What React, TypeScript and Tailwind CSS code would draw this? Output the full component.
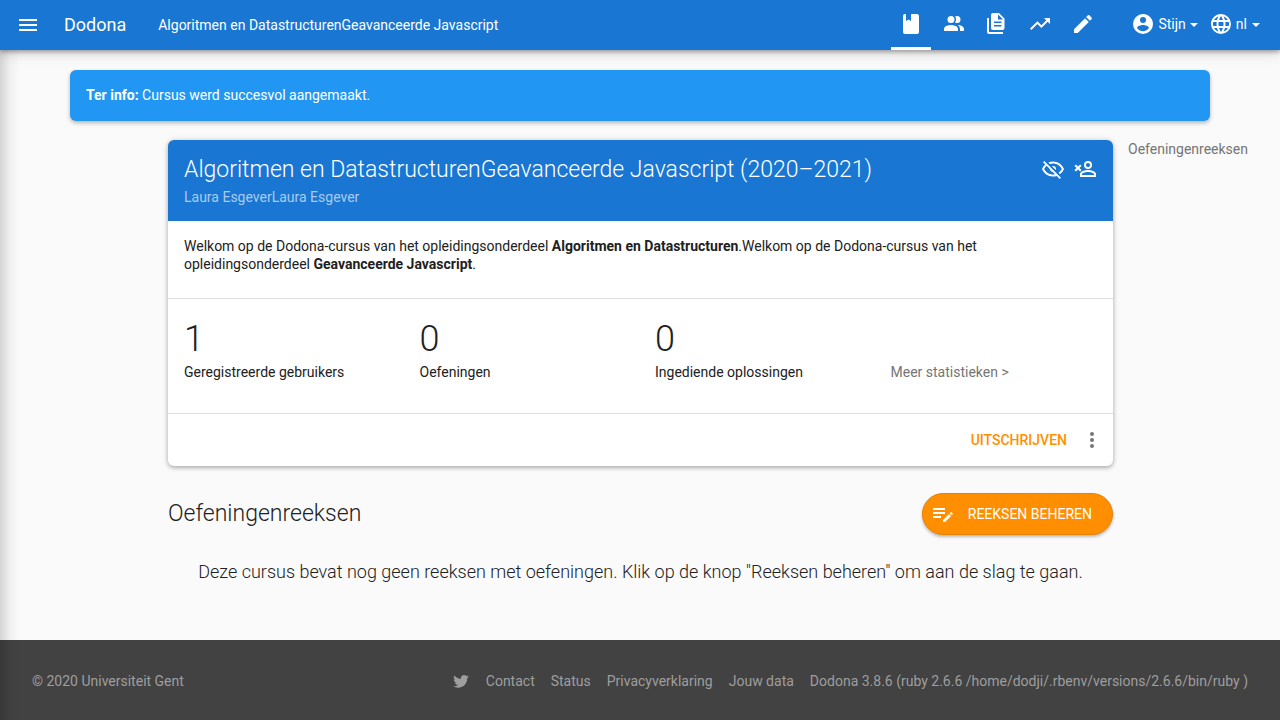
import React from "react";

const paths = {
  menu: "M3,6H21V8H3V6M3,11H21V13H3V11M3,16H21V18H3V16Z",
  book: "M18,22A2,2 0 0,0 20,20V4C20,2.89 19.1,2 18,2H12V9L9.5,7.5L7,9V2H6A2,2 0 0,0 4,4V20A2,2 0 0,0 6,22H18Z",
  users:
    "M16 17V19H2V17S2 13 9 13 16 17 16 17M12.5 7.5A3.5 3.5 0 1 0 9 11A3.5 3.5 0 0 0 12.5 7.5M15.94 13A5.32 5.32 0 0 1 18 17V19H22V17S22 13.37 15.94 13M15 4A3.39 3.39 0 0 0 13.07 4.59A5 5 0 0 1 13.07 10.41A3.39 3.39 0 0 0 15 11A3.5 3.5 0 0 0 15 4Z",
  documents:
    "M8,1H14L19.5,6.5V16A2,2 0 0,1 17.5,18H8A2,2 0 0,1 6,16V3A2,2 0 0,1 8,1M13,2.5V7.5H18L13,2.5M9,9.5V11H16.5V9.5H9M9,13V14.5H16.5V13H9M2,6H4V20H18V22H4A2,2 0 0,1 2,20V6Z",
  trend:
    "M16,6L18.29,8.29L13.41,13.17L9.41,9.17L2,16.59L3.41,18L9.41,12L13.41,16L19.71,9.71L22,12V6H16Z",
  pencil:
    "M20.71,7.04C21.1,6.65 21.1,6 20.71,5.63L18.37,3.29C18,2.9 17.35,2.9 16.96,3.29L15.12,5.12L18.87,8.87M3,17.25V21H6.75L17.81,9.93L14.06,6.18L3,17.25Z",
  account:
    "M12,19.2C9.5,19.2 7.29,17.92 6,16C6.03,14 10,12.9 12,12.9C14,12.9 17.97,14 18,16C16.71,17.92 14.5,19.2 12,19.2M12,5A3,3 0 0,1 15,8A3,3 0 0,1 12,11A3,3 0 0,1 9,8A3,3 0 0,1 12,5M12,2A10,10 0 0,0 2,12A10,10 0 0,0 12,22A10,10 0 0,0 22,12C22,6.47 17.5,2 12,2Z",
  web: "M16.36,14C16.44,13.34 16.5,12.68 16.5,12C16.5,11.32 16.44,10.66 16.36,10H19.74C19.9,10.64 20,11.31 20,12C20,12.69 19.9,13.36 19.74,14M14.59,19.56C15.19,18.45 15.65,17.25 15.97,16H18.92C17.96,17.65 16.43,18.93 14.59,19.56M14.34,14H9.66C9.56,13.34 9.5,12.68 9.5,12C9.5,11.32 9.56,10.65 9.66,10H14.34C14.43,10.65 14.5,11.32 14.5,12C14.5,12.68 14.43,13.34 14.34,14M12,19.96C11.17,18.76 10.5,17.43 10.09,16H13.91C13.5,17.43 12.83,18.76 12,19.96M8,8H5.08C6.03,6.34 7.57,5.06 9.4,4.44C8.8,5.55 8.35,6.75 8,8M5.08,16H8C8.35,17.25 8.8,18.45 9.4,19.56C7.57,18.93 6.03,17.65 5.08,16M4.26,14C4.1,13.36 4,12.69 4,12C4,11.31 4.1,10.64 4.26,10H7.64C7.56,10.66 7.5,11.32 7.5,12C7.5,12.68 7.56,13.34 7.64,14M12,4.03C12.83,5.23 13.5,6.57 13.91,8H10.09C10.5,6.57 11.17,5.23 12,4.03M18.92,8H15.97C15.65,6.75 15.19,5.55 14.59,4.44C16.43,5.07 17.96,6.34 18.92,8M12,2C6.47,2 2,6.5 2,12A10,10 0 0,0 12,22A10,10 0 0,0 22,12A10,10 0 0,0 12,2Z",
  hidden:
    "M2,5.27L3.28,4L20,20.72L18.73,22L15.65,18.92C14.5,19.3 13.28,19.5 12,19.5C7,19.5 2.73,16.39 1,12C1.69,10.24 2.79,8.69 4.19,7.46L2,5.27M12,9A3,3 0 0,1 15,12C15,12.35 14.94,12.69 14.83,13L11,9.17C11.31,9.06 11.65,9 12,9M12,4.5C17,4.5 21.27,7.61 23,12C22.18,14.08 20.79,15.88 19,17.19L17.58,15.76C18.94,14.82 20.06,13.54 20.82,12C19.17,8.64 15.76,6.5 12,6.5C10.91,6.5 9.84,6.68 8.84,7L7.3,5.47C8.74,4.85 10.33,4.5 12,4.5M3.18,12C4.83,15.36 8.24,17.5 12,17.5C12.69,17.5 13.37,17.43 14,17.29L11.72,15C10.29,14.85 9.15,13.71 9,12.28L5.6,8.87C4.61,9.72 3.78,10.78 3.18,12Z",
  closed:
    "M15,4A4,4 0 0,0 11,8A4,4 0 0,0 15,12A4,4 0 0,0 19,8A4,4 0 0,0 15,4M15,5.9C16.16,5.9 17.1,6.84 17.1,8C17.1,9.16 16.16,10.1 15,10.1A2.1,2.1 0 0,1 12.9,8A2.1,2.1 0 0,1 15,5.9M15,13C12.33,13 7,14.33 7,17V20H23V17C23,14.33 17.67,13 15,13M15,14.9C17.97,14.9 21.1,16.36 21.1,17V18.1H8.9V17C8.9,16.36 12,14.9 15,14.9M5,9.59L7.12,7.46L8.54,8.88L6.41,11L8.54,13.12L7.12,14.54L5,12.41L2.88,14.54L1.46,13.12L3.59,11L1.46,8.88L2.88,7.46L5,9.59Z",
  dots: "M12,16A2,2 0 0,1 14,18A2,2 0 0,1 12,20A2,2 0 0,1 10,18A2,2 0 0,1 12,16M12,10A2,2 0 0,1 14,12A2,2 0 0,1 12,14A2,2 0 0,1 10,12A2,2 0 0,1 12,10M12,4A2,2 0 0,1 14,6A2,2 0 0,1 12,8A2,2 0 0,1 10,6A2,2 0 0,1 12,4Z",
  listEdit:
    "M2,6V8H14V6H2M2,10V12H14V10H2M20.04,10.13C19.9,10.13 19.76,10.19 19.65,10.3L18.65,11.3L20.7,13.35L21.7,12.35C21.92,12.14 21.92,11.79 21.7,11.58L20.42,10.3C20.31,10.19 20.18,10.13 20.04,10.13M18.07,11.88L12,17.94V20H14.06L20.12,13.93L18.07,11.88M2,14V16H10V14H2Z",
  twitter:
    "M22.46,6C21.69,6.35 20.86,6.58 20,6.69C20.88,6.16 21.56,5.32 21.88,4.31C21.05,4.81 20.13,5.16 19.16,5.36C18.37,4.5 17.26,4 16,4C13.65,4 11.73,5.92 11.73,8.29C11.73,8.63 11.77,8.96 11.84,9.27C8.28,9.09 5.11,7.38 3,4.79C2.63,5.42 2.42,6.16 2.42,6.94C2.42,8.43 3.17,9.75 4.33,10.5C3.62,10.5 2.96,10.3 2.38,10C2.38,10 2.38,10 2.38,10.03C2.38,12.11 3.86,13.85 5.82,14.24C5.46,14.34 5.08,14.39 4.69,14.39C4.42,14.39 4.15,14.36 3.89,14.31C4.43,16 6,17.26 7.89,17.29C6.43,18.45 4.58,19.13 2.56,19.13C2.22,19.13 1.88,19.11 1.54,19.07C3.44,20.29 5.7,21 8.12,21C16,21 20.33,14.46 20.33,8.79C20.33,8.6 20.33,8.42 20.32,8.23C21.16,7.63 21.88,6.87 22.46,6Z",
};

type IconName = keyof typeof paths;

function Icon({ name, className = "size-6" }: { name: IconName; className?: string }) {
  return (
    <svg viewBox="0 0 24 24" fill="currentColor" aria-hidden="true" className={`shrink-0 ${className}`}>
      <path fillRule="evenodd" d={paths[name]} />
    </svg>
  );
}

function Caret() {
  return (
    <svg viewBox="0 0 8 4" fill="currentColor" aria-hidden="true" className="mt-0.5 h-1 w-2 shrink-0">
      <path d="M0 0H8L4 4Z" />
    </svg>
  );
}

const navItems: { icon: IconName; label: string; active?: boolean }[] = [
  { icon: "book", label: "Cursus", active: true },
  { icon: "users", label: "Gebruikers" },
  { icon: "documents", label: "Oplossingen" },
  { icon: "trend", label: "Statistieken" },
  { icon: "pencil", label: "Bewerken" },
];

const stats = [
  { value: 1, label: "Geregistreerde gebruikers" },
  { value: 0, label: "Oefeningen" },
  { value: 0, label: "Ingediende oplossingen" },
];

const footerLinks = [
  "Contact",
  "Status",
  "Privacyverklaring",
  "Jouw data",
  "Dodona 3.8.6 (ruby 2.6.6 /home/dodji/.rbenv/versions/2.6.6/bin/ruby )",
];

function Navbar() {
  return (
    <header className="relative z-20 flex h-[50px] items-center bg-[#1976d2] pr-5 pl-4 text-white shadow-[0_2px_4px_rgba(0,0,0,0.3),0_4px_12px_rgba(0,0,0,0.14)]">
      <button type="button" aria-label="Menu">
        <Icon name="menu" />
      </button>
      <a href="#" className="ml-6 text-lg">
        Dodona
      </a>
      <a href="#" className="ml-8">
        Algoritmen en DatastructurenGeavanceerde Javascript
      </a>
      <nav className="ml-auto flex gap-[3px] self-stretch">
        {navItems.map((item) => (
          <a
            key={item.label}
            href="#"
            aria-label={item.label}
            className={`flex w-10 items-center justify-center border-b-[3px] ${item.active ? "border-white" : "border-transparent"}`}
          >
            <Icon name={item.icon} />
          </a>
        ))}
      </nav>
      <button type="button" className="mb-0.5 ml-7 flex items-center">
        <Icon name="account" />
        <span className="mr-1 ml-[3px]">Stijn</span>
        <Caret />
      </button>
      <button type="button" className="mb-0.5 ml-[11px] flex items-center">
        <Icon name="web" />
        <span className="mr-[5px] ml-[3px]">nl</span>
        <Caret />
      </button>
    </header>
  );
}

function CourseCard() {
  return (
    <article className="overflow-hidden rounded-md bg-white shadow-[0_2px_4px_rgba(0,0,0,0.25),0_0_6px_rgba(0,0,0,0.12)]">
      <header className="flex h-[81px] items-start justify-between bg-[#1976d2] px-4 pt-[14px] text-white">
        <div>
          <h1 className="text-[23px] leading-8 font-light">
            Algoritmen en DatastructurenGeavanceerde Javascript (2020–2021)
          </h1>
          <p className="leading-[22px] text-[#a9cbee]">Laura EsgeverLaura Esgever</p>
        </div>
        <div className="mt-[3px] flex gap-2">
          <Icon name="hidden" />
          <Icon name="closed" />
        </div>
      </header>
      <p className="px-4 pt-4 pb-[25px] leading-[18px]">
        Welkom op de Dodona-cursus van het opleidingsonderdeel <b>Algoritmen en Datastructuren</b>
        .Welkom op de Dodona-cursus van het opleidingsonderdeel <b>Geavanceerde Javascript</b>.
      </p>
      <div className="grid grid-cols-4 gap-x-[29px] border-t border-[#dedede] px-4 pt-5 pb-[31px]">
        {stats.map((stat) => (
          <div key={stat.label}>
            <div className="text-4xl font-light">{stat.value}</div>
            <div className="mt-[3px] leading-5">{stat.label}</div>
          </div>
        ))}
        <a href="#" className="mt-[43px] leading-5 text-[#757575]">
          Meer statistieken &gt;
        </a>
      </div>
      <div className="flex h-[53px] items-center justify-end gap-[13px] border-t border-[#dedede] pr-[9px]">
        <button type="button" className="font-medium text-[#ff8f00]">
          UITSCHRIJVEN
        </button>
        <button type="button" aria-label="Meer acties" className="text-[#757575]">
          <Icon name="dots" />
        </button>
      </div>
    </article>
  );
}

export default function App() {
  return (
    <div className="relative flex min-h-screen flex-col bg-[#fafafa] font-[Roboto,sans-serif] text-sm text-[#212121]">
      <Navbar />
      <div className="px-[70px] pt-5">
        <div role="alert" className="rounded-md bg-[#2196f3] px-4 py-[15px] leading-[21px] text-white shadow-[0_2px_4px_rgba(0,0,0,0.28)]">
          <strong>Ter info:</strong> Cursus werd succesvol aangemaakt.
        </div>
      </div>
      <main className="mt-[19px] grid grow grid-cols-[168px_1fr_167px]">
        <div className="col-start-2">
          <CourseCard />
          <div className="mt-[27px] flex items-center justify-between">
            <h2 className="text-[23px] leading-8 font-light">Oefeningenreeksen</h2>
            <button
              type="button"
              className="flex h-[42px] items-center gap-[13px] rounded-full border border-[#ea8300] bg-[#ff8f00] pr-5 pl-2 text-white shadow-[0_2px_3px_rgba(0,0,0,0.25)]"
            >
              <Icon name="listEdit" />
              REEKSEN BEHEREN
            </button>
          </div>
          <p className="mt-6 text-center text-lg leading-[26px] font-light">
            Deze cursus bevat nog geen reeksen met oefeningen. Klik op de knop "Reeksen beheren" om aan de slag te gaan.
          </p>
        </div>
        <aside className="pl-[15px]">
          <a href="#" className="block leading-[18px] text-[#757575]">
            Oefeningenreeksen
          </a>
        </aside>
      </main>
      <footer className="flex h-20 items-center justify-between bg-[#424242] px-8 pt-0.5 text-[#9e9e9e]">
        <p>© 2020 Universiteit Gent</p>
        <nav className="flex items-center gap-4">
          <a href="#" aria-label="Twitter">
            <Icon name="twitter" className="size-[18px]" />
          </a>
          {footerLinks.map((link) => (
            <a key={link} href="#">
              {link}
            </a>
          ))}
        </nav>
      </footer>
      <div className="pointer-events-none absolute inset-y-0 left-0 z-10 w-5 bg-linear-to-r from-black/15 via-black/4 to-transparent" />
    </div>
  );
}
